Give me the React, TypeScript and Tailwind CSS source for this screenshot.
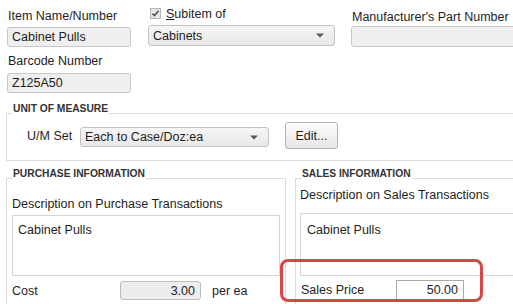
import React from "react";

function Caret() {
  return (
    <svg width="8" height="5" viewBox="0 0 8 5" className="shrink-0">
      <path d="M0 0.5h8L4 4.5z" fill="#5a5a5a" />
    </svg>
  );
}

function Select({ value, className }: { value: string; className: string }) {
  return (
    <div
      className={`flex items-center justify-between rounded-[3px] border border-[#c3c3c3] bg-gradient-to-b from-[#f6f6f6] to-[#e8e8e8] pl-[4px] pr-[10px] ${className}`}
    >
      <span>{value}</span>
      <Caret />
    </div>
  );
}

function Field({ value, className }: { value?: string; className: string }) {
  return (
    <div className={`flex items-center rounded-[3px] border border-[#c8c8c8] bg-[#efefef] pl-[4px] ${className}`}>
      {value}
    </div>
  );
}

function Legend({ children, className }: { children: React.ReactNode; className: string }) {
  return (
    <div
      className={`-mt-[10px] w-fit bg-white px-[1px] text-[10.25px] font-bold leading-[10px] text-[#333] ${className}`}
    >
      {children}
    </div>
  );
}

export default function App() {
  return (
    <div className="relative h-[304px] w-[513px] overflow-hidden bg-white font-['Liberation_Sans',Arial,sans-serif] text-[12.5px] leading-[14px] text-[#1e1e1e]">
      {/* top fields */}
      <div className="flex pl-[7px] pt-[6px]">
        <div className="w-[124px] shrink-0">
          <div className="pl-px pt-[3px]">Item Name/Number</div>
          <Field value="Cabinet Pulls" className="mt-[4px] h-[20px]" />
          <div className="mt-[7px] pl-px">Barcode Number</div>
          <Field value="Z125A50" className="mt-[5px] h-[20px]" />
        </div>

        <div className="ml-[17px] w-[187px] shrink-0">
          <div className="flex h-[14px] items-center pl-[2px] pt-[1px]">
            <span className="flex h-[11px] w-[11px] items-center justify-center border border-[#b5b5b5] bg-[#e6e6e6]">
              <svg width="9" height="9" viewBox="0 0 9 9">
                <path d="M1.5 4.6l2 2L7.6 1.8" fill="none" stroke="#555" strokeWidth="1.6" />
              </svg>
            </span>
            <span className="ml-[5px]">
              <span className="underline underline-offset-1">S</span>ubitem of
            </span>
          </div>
          <Select value="Cabinets" className="mt-[5px] h-[21px]" />
        </div>

        <div className="ml-[16px] w-[200px] shrink-0">
          <div className="pl-px pt-[4px]">Manufacturer's Part Number</div>
          <Field className="mt-[2px] h-[21px]" />
        </div>
      </div>

      {/* unit of measure */}
      <div className="ml-[6px] mt-[20px] h-[48px] w-[560px] border border-[#dadada]">
        <Legend className="ml-[5px]">UNIT OF MEASURE</Legend>
        <div className="mt-[8px] flex items-start">
          <div className="mt-[7px] w-[73px] shrink-0 pl-[20px]">U/M Set</div>
          <Select value="Each to Case/Doz:ea" className="mt-[5px] h-[20px] w-[189px] shrink-0" />
          <button className="ml-[16px] h-[27px] w-[53px] shrink-0 rounded-[3px] border border-[#b4b4b4] bg-gradient-to-b from-[#fdfdfd] to-[#e6e6e6] text-[12.5px] text-[#1e1e1e]">
            Edit...
          </button>
        </div>
      </div>

      {/* purchase / sales */}
      <div className="mt-[17px] flex">
        <div className="ml-[6px] h-[140px] w-[280px] shrink-0 border border-[#dadada]">
          <Legend className="ml-[5px]">PURCHASE INFORMATION</Legend>
          <div className="mt-[18px] pl-[5px]">Description on Purchase Transactions</div>
          <div className="ml-[5px] mt-[4px] h-[61px] w-[268px] border border-[#d6d6d6] bg-white pl-[5px] pt-[7px]">
            Cabinet Pulls
          </div>
          <div className="mt-[5px] flex items-center">
            <div className="w-[113px] shrink-0 pl-[5px]">Cost</div>
            <div className="flex h-[19px] w-[81px] shrink-0 items-center justify-end rounded-[3px] border border-[#bdbdbd] bg-[#ededed] pr-[5px]">
              3.00
            </div>
            <div className="ml-[11px]">per ea</div>
          </div>
        </div>

        <div className="ml-[9px] h-[140px] w-[300px] shrink-0 border border-[#dadada]">
          <Legend className="ml-[5px]">SALES INFORMATION</Legend>
          <div className="mt-[9px] pl-[4px]">Description on Sales Transactions</div>
          <div className="ml-[4px] mt-[11px] h-[63px] w-[290px] border border-[#d6d6d6] bg-white pl-[6px] pt-[9px]">
            Cabinet Pulls
          </div>
          <div className="mt-[4px] flex items-center">
            <div className="w-[100px] shrink-0 pl-[5px]">Sales Price</div>
            <div className="flex h-[20px] w-[68px] shrink-0 items-center justify-end border border-[#a9a9a9] bg-white pr-[5px]">
              50.00
            </div>
          </div>
        </div>
      </div>

      {/* highlight */}
      <div className="absolute left-[280px] top-[259px] h-[43px] w-[203px] rounded-[8px] border-[3px] border-[#d9464a]" />
    </div>
  );
}
